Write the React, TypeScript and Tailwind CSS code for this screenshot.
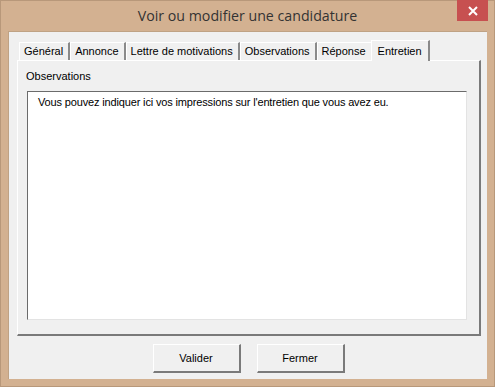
import React from 'react'

const tabs = ['Général', 'Annonce', 'Lettre de motivations', 'Observations', 'Réponse', 'Entretien']

function Tab({ label, active }: { label: string; active: boolean }) {
  if (active) {
    return (
      <div className="relative z-10 -mb-px h-[21px] -mx-[2px] px-[6px] flex items-start pt-[2px] bg-[#f0f0f0] border-t border-l border-white border-r-2 border-r-[#8a8a8a] text-[11px] text-black">
        {label}
      </div>
    )
  }
  return (
    <div className="h-[18px] pl-[4px] pr-[5px] flex items-center bg-[#f0f0f0] border-t border-l border-white border-r-2 border-r-[#8a8a8a] text-[11px] text-black">
      {label}
    </div>
  )
}

function Button({ label }: { label: string }) {
  return (
    <button className="w-[88px] h-[29px] bg-[#f0f0f0] border-t border-l border-white border-r-2 border-b-2 border-r-[#7a7a7a] border-b-[#7a7a7a] text-[11px] text-black">
      {label}
    </button>
  )
}

export default function App() {
  return (
    <div
      className="w-[495px] h-[387px] bg-[#d3b191] border border-[#b8987a] flex flex-col"
      style={{ fontFamily: '"Liberation Sans", Arial, sans-serif' }}
    >
      {/* title bar */}
      <div className="relative h-[30px] flex items-center justify-center shrink-0">
        <span
          className="text-[14.2px] text-[#333]"
          style={{ fontFamily: '"Open Sans", "Noto Sans", sans-serif' }}
        >
          Voir ou modifier une candidature
        </span>
        <div className="absolute -top-px right-[6px] w-[31px] h-[21px] bg-[#c75050] flex items-center justify-center">
          <svg width="10" height="10" viewBox="0 0 10 10">
            <path d="M1 1 L9 9 M9 1 L1 9" stroke="white" strokeWidth="2" />
          </svg>
        </div>
      </div>

      {/* client area */}
      <div className="mx-[7px] h-[348px] bg-[#f0f0f0] border-t border-l border-[#bfa284] flex flex-col px-[8px] pt-[8px]">
        <div className="flex items-end pl-[2px] h-[20px]">
          {tabs.map(t => (
            <Tab key={t} label={t} active={t === 'Entretien'} />
          ))}
        </div>

        <div className="h-[276px] w-[464px] border-t border-l border-white border-r-2 border-b-2 border-r-[#7a7a7a] border-b-[#7a7a7a] flex flex-col pl-[8px] pt-[8px]">
          <div className="text-[11px] text-black h-[14px] leading-[14px]">Observations</div>
          <div className="mt-[8px] ml-[1px] w-[440px] h-[229px] bg-white border-t border-l border-[#6b6b6b] border-r border-b border-r-[#e3e3e3] border-b-[#e3e3e3] px-[10px] pt-[2px] text-[11px] tracking-[-0.15px] text-black">
            Vous pouvez indiquer ici vos impressions sur l'entretien que vous avez eu.
          </div>
        </div>

        <div className="flex justify-center gap-[16px] mt-[8px] pl-[1px]">
          <Button label="Valider" />
          <Button label="Fermer" />
        </div>
      </div>
    </div>
  )
}
